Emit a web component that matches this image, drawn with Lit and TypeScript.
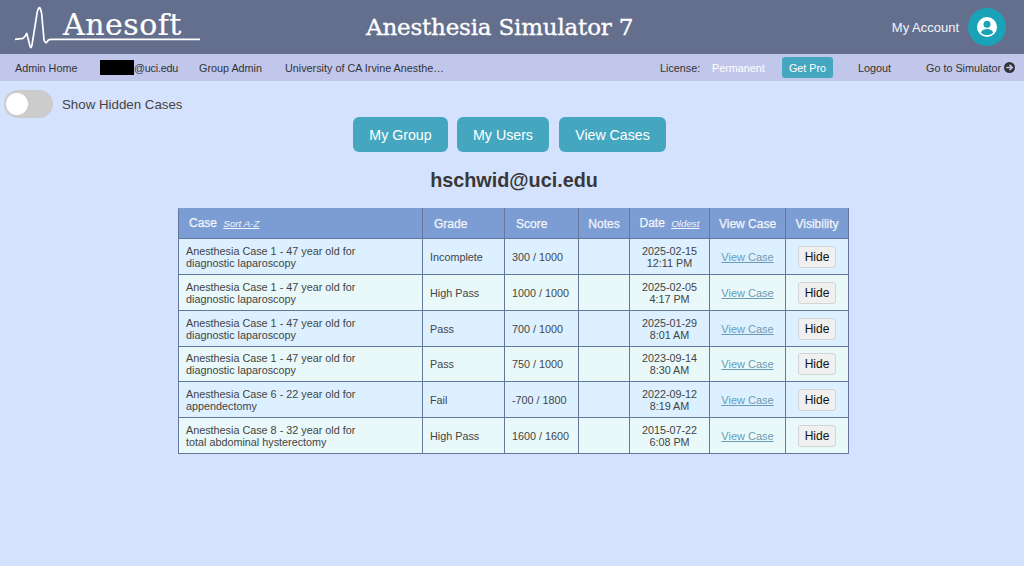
import { LitElement, html, css } from "lit";
import { customElement } from "lit/decorators.js";

const rows = [
  ["Anesthesia Case 1 - 47 year old for", "diagnostic laparoscopy", "Incomplete", "300 / 1000", "2025-02-15", "12:11 PM"],
  ["Anesthesia Case 1 - 47 year old for", "diagnostic laparoscopy", "High Pass", "1000 / 1000", "2025-02-05", "4:17 PM"],
  ["Anesthesia Case 1 - 47 year old for", "diagnostic laparoscopy", "Pass", "700 / 1000", "2025-01-29", "8:01 AM"],
  ["Anesthesia Case 1 - 47 year old for", "diagnostic laparoscopy", "Pass", "750 / 1000", "2023-09-14", "8:30 AM"],
  ["Anesthesia Case 6 - 22 year old for", "appendectomy", "Fail", "-700 / 1800", "2022-09-12", "8:19 AM"],
  ["Anesthesia Case 8 - 32 year old for", "total abdominal hysterectomy", "High Pass", "1600 / 1600", "2015-07-22", "6:08 PM"],
];

@customElement("app-root")
export class AppRoot extends LitElement {
  static styles = css`
    :host { display: block; width: 1024px; height: 566px; background: #d5e2fd; font-family: "Liberation Sans", Arial, sans-serif; color: #333; overflow: hidden; }
    .top { height: 54px; background: #646f8d; display: flex; align-items: center; color: #fff; }
    .logo { display: flex; align-items: flex-end; width: 366px; height: 54px; flex: none; box-sizing: border-box; padding-left: 15px; }
    .logo-mark { position: relative; width: 185px; height: 46px; margin-bottom: 4px; }
    .logo-mark svg { display: block; }
    .logo-text { position: absolute; left: 48px; top: 3px; font: 30px/36px "DejaVu Serif", serif; letter-spacing: 0.5px; color: #fff; -webkit-text-stroke: 0.2px #fff; }
    .title { font: 23px/30px "DejaVu Serif", serif; letter-spacing: -0.2px; white-space: nowrap; -webkit-text-stroke: 0.35px #fff; }
    .account { margin-left: auto; display: flex; align-items: center; gap: 9px; padding-right: 18px; font-size: 13px; color: #f2f4f8; }
    .nav { height: 27px; background: #c1c7eb; display: grid; grid-template-columns: 85px 99px 86px 375px 52px 70px 76px 68px 98px; padding-left: 15px; align-items: center; font-size: 10.8px; color: #333; white-space: nowrap; }
    .black { display: inline-block; width: 34px; height: 15px; background: #000; vertical-align: -3px; }
    .mail { letter-spacing: -0.2px; }
    .perm { color: #fff; }
    .pro { width: 51px; height: 21px; background: #45a7bf; color: #fff; border-radius: 3px; display: flex; align-items: center; justify-content: center; }
    .sim { display: flex; align-items: center; gap: 3px; }
    .toggle-row { height: 37px; display: flex; align-items: center; padding: 9px 0 0 4px; box-sizing: border-box; gap: 9px; font-size: 13.3px; color: #444; }
    .track { width: 49px; height: 28px; border-radius: 14px; background: #ccc; position: relative; }
    .knob { position: absolute; left: 2px; top: 3px; width: 22px; height: 22px; border-radius: 50%; background: #fff; }
    .btns { display: flex; justify-content: flex-start; padding-left: 353px; gap: 9px; margin-top: -1px; }
    .btn { height: 35px; border-radius: 6px; background: #45a7bf; color: #fff; font-size: 14.2px; display: flex; align-items: center; justify-content: center; }
    .b1 { width: 95px; } .b2 { width: 92px; margin-right: 1px; } .b3 { width: 107px; }
    h2 { margin: 16px 0 0; height: 25px; font: bold 19.8px/25px "Liberation Sans", Arial, sans-serif; color: #383838; text-align: center; padding-left: 4px; }
    .wrap { margin: 15px 0 0 178px; width: 670px; }
    table { border-collapse: collapse; table-layout: fixed; width: 670px; font-size: 10.8px; line-height: 12px; color: #444; border: 1px solid #5f7499; }
    th { height: 29px; background: #7b9dd3; color: #f2f5fb; font-weight: normal; font-size: 12px; text-align: center; padding: 0; border: 1px solid #64789f; border-top-color: #7b9dd3; white-space: nowrap; -webkit-text-stroke: 0.25px #f2f5fb; }
    th.lt { text-align: left; padding-left: 11px; }
    th.first { padding-left: 10px; }
    th u { font-size: 9.8px; font-style: italic; margin-left: 3px; -webkit-text-stroke: 0; }
    td { height: 36px; padding: 0; border: 1px solid #64789f; text-align: center; box-sizing: border-box; }
    tr.short td { height: 35px; }
    tr.a td { background: #dcf0ff; }
    tr.b td { background: #e9f8f8; }
    td.lt { text-align: left; padding-left: 7px; white-space: nowrap; }
    .c1 { width: 244px; } .c2 { width: 82px; } .c3 { width: 74px; } .c4 { width: 51px; } .c5 { width: 80px; } .c6 { width: 76px; } .c7 { width: 63px; }
    .link { color: #6a9cb8; text-decoration: underline; font-size: 11px; }
    .hide { display: inline-flex; width: 38px; height: 22px; box-sizing: border-box; align-items: center; justify-content: center; background: #f0f0f0; border: 1px solid #d4d4d4; border-radius: 3px; color: #111; font-size: 12px; vertical-align: middle; }
  `;

  render() {
    return html`
      <div class="top">
        <div class="logo">
          <div class="logo-mark">
            <svg width="185" height="46" viewBox="0 0 185 46" fill="none">
              <path d="M0 35.3 L8 34.3 Q10 33 11.7 29.3 L15 42 Q16 45.5 17 41 L22.3 7.7 Q24 2 25 4 Q26 6 26.7 10 L29 36 Q30.5 40 32 38 Q33 35.3 36 35.3 L185 35.3" stroke="#fff" stroke-width="1.7" stroke-linejoin="round" stroke-linecap="round"/>
            </svg>
            <span class="logo-text">Anesoft</span>
          </div>
        </div>
        <div class="title">Anesthesia Simulator 7</div>
        <div class="account">
          <span>My Account</span>
          <svg width="38" height="38" viewBox="0 0 38 38">
            <circle cx="19" cy="19" r="19" fill="#1aa3b8"/>
            <circle cx="19" cy="19" r="10" fill="#fff"/>
            <circle cx="19" cy="16.2" r="3.5" fill="#1aa3b8"/>
            <path d="M12.8 24.4 C14 21.6 16.5 21 19 21 C21.5 21 24 21.6 25.2 24.4 C23.5 26.4 21.5 27 19 27 C16.5 27 14.5 26.4 12.8 24.4 Z" fill="#1aa3b8"/>
          </svg>
        </div>
      </div>
      <div class="nav">
        <span>Admin Home</span>
        <span class="mail"><span class="black"></span>@uci.edu</span>
        <span>Group Admin</span>
        <span>University of CA Irvine Anesthe…</span>
        <span>License:</span>
        <span class="perm">Permanent</span>
        <div class="pro">Get Pro</div>
        <span>Logout</span>
        <span class="sim">Go to Simulator
          <svg width="11" height="11" viewBox="0 0 11 11">
            <circle cx="5.5" cy="5.5" r="5.5" fill="#333"/>
            <path d="M2.2 5.5 H8 M5.5 2.8 L8.2 5.5 L5.5 8.2" stroke="#c1c7eb" stroke-width="1.6" fill="none"/>
          </svg>
        </span>
      </div>
      <div class="toggle-row"><div class="track"><div class="knob"></div></div><span>Show Hidden Cases</span></div>
      <div class="btns">
        <div class="btn b1">My Group</div>
        <div class="btn b2">My Users</div>
        <div class="btn b3">View Cases</div>
      </div>
      <h2>hschwid@uci.edu</h2>
      <div class="wrap">
        <table>
          <colgroup><col class="c1"/><col class="c2"/><col class="c3"/><col class="c4"/><col class="c5"/><col class="c6"/><col class="c7"/></colgroup>
          <thead>
            <tr>
              <th class="lt first">Case <u>Sort A-Z</u></th>
              <th class="lt">Grade</th>
              <th class="lt">Score</th>
              <th>Notes</th>
              <th>Date <u>Oldest</u></th>
              <th>View Case</th>
              <th>Visibility</th>
            </tr>
          </thead>
          <tbody>
            ${rows.map((r, i) => html`
              <tr class="${i % 2 ? "b" : "a"} ${i === 3 ? "short" : ""}">
                <td class="lt">${r[0]}<br />${r[1]}</td>
                <td class="lt">${r[2]}</td>
                <td class="lt">${r[3]}</td>
                <td></td>
                <td>${r[4]}<br />${r[5]}</td>
                <td><span class="link">View Case</span></td>
                <td><span class="hide">Hide</span></td>
              </tr>`)}
          </tbody>
        </table>
      </div>
    `;
  }
}
